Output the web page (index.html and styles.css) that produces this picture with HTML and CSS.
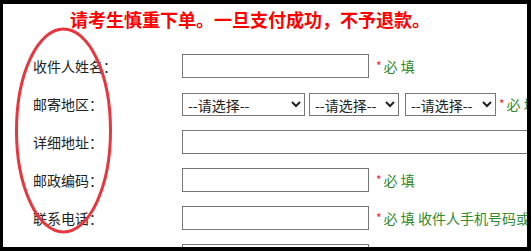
FILE: index.html
```html
<!DOCTYPE html>
<html lang="zh-CN">
<head>
<meta charset="utf-8">
<title>收件信息</title>
<link rel="stylesheet" href="styles.css">
</head>
<body>
<div class="frame">
  <h1 class="notice">请考生慎重下单。一旦支付成功，不予退款。</h1>
  <div class="form">
    <div class="row">
      <span class="label">收件人姓名：</span>
      <div class="field"><input class="text" type="text"><span class="req"><i>*</i>必 填</span></div>
    </div>
    <div class="row">
      <span class="label">邮寄地区：</span>
      <div class="field">
        <select class="sel sel-a"><option>--请选择--</option></select>
        <select class="sel sel-b"><option>--请选择--</option></select>
        <select class="sel sel-c"><option>--请选择--</option></select>
        <span class="req req-tight"><i>*</i>必 填</span>
      </div>
    </div>
    <div class="row">
      <span class="label">详细地址：</span>
      <div class="field"><input class="text wide" type="text"></div>
    </div>
    <div class="row">
      <span class="label">邮政编码：</span>
      <div class="field"><input class="text" type="text"><span class="req"><i>*</i>必 填</span></div>
    </div>
    <div class="row">
      <span class="label">联系电话：</span>
      <div class="field"><input class="text" type="text"><span class="req"><i>*</i>必 填 收件人手机号码或固定电话</span></div>
    </div>
    <div class="row">
      <span class="label"></span>
      <div class="field"><input class="text" type="text"></div>
    </div>
  </div>
  <svg class="circle" width="531" height="251" viewBox="0 0 531 251">
    <ellipse cx="63.5" cy="130.5" rx="47" ry="101.5" fill="none" stroke="#e8363e" stroke-width="3"/>
  </svg>
</div>
</body>
</html>
```

FILE: styles.css
```css
html, body {
  margin: 0;
  padding: 0;
  background: #000;
}

.frame {
  position: relative;
  box-sizing: border-box;
  width: 531px;
  height: 251px;
  background: #fff;
  border-style: solid;
  border-color: #000;
  border-width: 4px 4px 4px 3px;
  overflow: hidden;
  font-family: "Noto Sans CJK SC", "Microsoft YaHei", sans-serif;
  font-size: 14px;
  color: #222;
}

.notice {
  margin: 0 0 13px 0;
  padding-left: 67px;
  height: 30px;
  line-height: 30px;
  font-size: 18px;
  font-weight: bold;
  color: #f00;
  white-space: nowrap;
}

.row {
  display: grid;
  grid-template-columns: 149px minmax(0, 1fr);
  align-items: center;
  height: 38px;
  padding-left: 30px;
}

.label {
  white-space: nowrap;
  line-height: 20px;
}

.field {
  display: flex;
  align-items: center;
  white-space: nowrap;
}

.field > * {
  flex-shrink: 0;
}

.text {
  box-sizing: border-box;
  width: 187px;
  height: 24px;
  margin: 0;
  border: 1px solid #777;
  border-radius: 0;
  padding: 0 4px;
  background: #fff;
}

.text.wide {
  width: 420px;
}

.sel {
  box-sizing: border-box;
  height: 23px;
  margin: 0 0 0 4px;
  padding: 0 0 0 1px;
  border: 1px solid #777;
  border-radius: 0;
  background: #fff;
  color: #222;
  font-family: "Noto Sans CJK SC", sans-serif;
  font-size: 14px;
  line-height: 20px;
}

.sel-a { width: 123px; margin-left: 0; }
.sel-b { width: 90px; }
.sel-c { width: 91px; margin-left: 6px; }

.req {
  margin-left: 7px;
  color: #2e8b2e;
  line-height: 20px;
}

.req-tight {
  margin-left: 3px;
}

.req i {
  font-style: normal;
  color: #e23;
  font-size: 12px;
  margin-right: 2px;
  vertical-align: 1px;
}

.circle {
  position: absolute;
  left: -3px;
  top: -4px;
  pointer-events: none;
}
```
